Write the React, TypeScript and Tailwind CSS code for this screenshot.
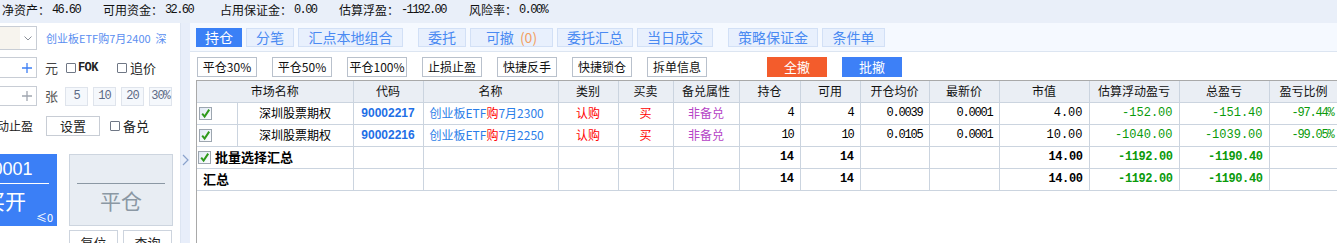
import React from 'react';

const cjk = "font-['Noto_Sans_CJK_SC',sans-serif]";
const mono = "font-['Liberation_Mono',monospace]";

const TickBox: React.FC = () => (
    <svg width="13" height="13" viewBox="0 0 13 13" className="shrink-0">
        <defs>
            <linearGradient id="tb" x1="0" y1="0" x2="1" y2="1">
                <stop offset="0" stopColor="#dfe8f4" />
                <stop offset="1" stopColor="#ffffff" />
            </linearGradient>
        </defs>
        <rect x="0.5" y="0.5" width="12" height="12" fill="url(#tb)" stroke="#9da6b0" />
        <path d="M3.2 6.6 L5.6 9.6 L10.2 2.6" stroke="#2f9a1c" strokeWidth="2" fill="none" />
    </svg>
);

const SmallBox: React.FC = () => <span className="block w-[10px] h-[10px] border border-[#6f7785] rounded-[1px] bg-white shrink-0" />;

const Plus: React.FC<{ color: string }> = ({ color }) => (
    <svg width="10" height="10" viewBox="0 0 10 10" className="ml-[22px]">
        <path d="M5 0 V10 M0 5 H10" stroke={color} strokeWidth="1.3" />
    </svg>
);

const TopBar: React.FC = () => {
    const items = [
        ['净资产：', '46.60', 'w-[101px]'],
        ['可用资金：', '32.60', 'w-[117px]'],
        ['占用保证金：', '0.00', 'w-[119px]'],
        ['估算浮盈：', '-1192.00', 'w-[130px]'],
        ['风险率：', '0.00%', 'w-[120px]'],
    ];
    return (
        <div className="h-[23px] bg-[#e9eff9] flex items-center pb-[4px] pl-[2px] text-[12px] text-[#111]">
            {items.map(([label, value, w]) => (
                <div key={label} className={`${w} flex items-center shrink-0`}>
                    <span>{label}</span>
                    <span className={`${mono} text-[12px] tracking-[-1.6px] ml-[2px]`}>{value}</span>
                </div>
            ))}
        </div>
    );
};

const LeftPanel: React.FC = () => (
    <div className="w-[180px] h-full bg-white overflow-hidden flex flex-col text-[12px] text-[#222]">
        <div className="mt-[3px] h-[24px] flex items-center">
            <div className="w-[37px] h-[24px] border-y border-r border-[#c8cdd5] flex">
                <div className="w-[20px] bg-[#f7f4ee]" />
                <div className="flex-1 flex items-center justify-center">
                    <svg width="8" height="5" viewBox="0 0 8 5"><path d="M0.5 0.5 L4 4 L7.5 0.5" stroke="#8a8f98" fill="none" /></svg>
                </div>
            </div>
            <span className="ml-[9px] text-[11px] text-[#5a8ef0] whitespace-pre">创业板ETF购7月2400  深</span>
        </div>
        <div className="mt-[7px] h-[21px] flex items-center">
            <div className="w-[37px] h-[21px] border-y border-r border-[#c8cdd5] flex items-center"><Plus color="#3d7ff5" /></div>
            <span className="ml-[8px] w-[21px] text-[13px] text-[#444]">元</span>
            <SmallBox />
            <span className={`ml-[2px] w-[39px] ${mono} text-[12px] font-bold tracking-[-0.6px]`}>FOK</span>
            <SmallBox />
            <span className="ml-[3px] text-[13px]">追价</span>
        </div>
        <div className="mt-[8px] h-[20px] flex items-center">
            <div className="w-[37px] h-[20px] border-y border-r border-[#c8cdd5] flex items-center"><Plus color="#a0a6b0" /></div>
            <span className="ml-[8px] w-[20px] text-[13px] text-[#555]">张</span>
            <div className="flex gap-[5px]">
                {['5', '10', '20', '30%'].map(v => (
                    <span key={v} className={`w-[23px] h-[19px] border border-[#dfe4ec] bg-[#f5f8fc] text-[#5d6a85] flex items-center justify-center text-[12px] ${mono} tracking-[-1px]`}>{v}</span>
                ))}
            </div>
        </div>
        <div className="mt-[10px] h-[20px] flex items-center">
            <span className="-ml-[15px] w-[61px] text-[12px] shrink-0">移动止盈</span>
            <span className="w-[54px] h-[20px] border border-[#c8cdd5] flex items-center justify-center text-[13px]">设置</span>
            <span className="ml-[10px]"><SmallBox /></span>
            <span className="ml-[3px] text-[13px]">备兑</span>
        </div>
        <div className="mt-[18px] h-[72px] flex gap-[12px] -ml-[47px] shrink-0">
            <div className="relative w-[104px] h-[72px] bg-[#3b7ff6] text-white flex flex-col items-stretch shrink-0">
                <div className="pt-[4px] h-[26px] leading-[22px] text-[18px] text-center font-['Liberation_Sans',sans-serif]">0.0001</div>
                <div className="mx-[8px] h-px bg-white mt-[3px]" />
                <div className="mt-[4px] h-[24px] leading-[24px] text-[21px] text-center">买开</div>
                <span className="absolute right-[4px] bottom-[3px] text-[11px] leading-none">≤0</span>
            </div>
            <div className="w-[104px] h-[72px] bg-[#e8edf3] border border-[#cdd5df] flex flex-col shrink-0">
                <div className="mx-[7px] h-px bg-[#8b98a4] mt-[28px]" />
                <div className="mt-[4px] h-[24px] leading-[24px] text-[21px] text-center text-[#8b98a4]">平仓</div>
            </div>
        </div>
        <div className="mt-[4px] ml-[69px] flex gap-[5px]">
            {['复位', '查询'].map(v => (
                <span key={v} className="w-[49px] h-[22px] border border-[#cdd4de] flex items-center justify-center text-[13px] pt-[4px]">{v}</span>
            ))}
        </div>
    </div>
);

const tabs = [
    { label: '持仓', w: 'w-[46px]', active: true },
    { label: '分笔', w: 'w-[48px]' },
    { label: '汇点本地组合', w: 'w-[105px]' },
    { label: '委托', w: 'w-[48px]', gap: true },
    { label: '可撤', w: 'w-[83px]', count: true },
    { label: '委托汇总', w: 'w-[76px]' },
    { label: '当日成交', w: 'w-[76px]' },
    { label: '策略保证金', w: 'w-[90px]', gap: true },
    { label: '条件单', w: 'w-[63px]' },
];

const tools = ['平仓30%', '平仓50%', '平仓100%', '止损止盈', '快捷反手', '快捷锁仓', '拆单信息'];

const cols = [40, 116, 70, 135, 60, 55, 66, 61, 60, 69, 70, 90, 90, 90, 69];
const heads = ['代码', '名称', '类别', '买卖', '备兑属性', '持仓', '可用', '开仓均价', '最新价', '市值', '估算浮动盈亏', '总盈亏', '盈亏比例'];

const rows = [
    { code: '90002217', price: '2300', pos: '4', avail: '4', open: '0.0039', last: '0.0001', mv: '4.00', fl: '-152.00', tot: '-151.40', ratio: '-97.44%' },
    { code: '90002216', price: '2250', pos: '10', avail: '10', open: '0.0105', last: '0.0001', mv: '10.00', fl: '-1040.00', tot: '-1039.00', ratio: '-99.05%' },
];

const td = 'border-r border-b border-[#cbd4df] p-0';
const num = `${td} text-right pr-[6px] ${mono} text-[12px] tracking-[-1.2px]`;
const wnum = `${td} text-right pr-[6px] ${mono} text-[12px]`;
const bnum = `${td} text-right pr-[6px] ${mono} text-[12px] font-bold tracking-[-0.4px]`;

const PositionTable: React.FC = () => (
    <table className="table-fixed border-collapse w-[1141px] text-[12px]">
        <colgroup>
            {cols.map((c, i) => <col key={i} style={{ width: c }} />)}
        </colgroup>
        <thead>
            <tr className="h-[21px] bg-[#eaeef4] text-[#111]">
                <th colSpan={2} className={`${td} font-normal`}>市场名称</th>
                {heads.map(h => <th key={h} className={`${td} font-normal`}>{h}</th>)}
            </tr>
        </thead>
        <tbody>
            {rows.map(r => (
                <tr key={r.code} className="h-[22px]">
                    <td className={`${td} pl-[2px]`}><div className="flex"><TickBox /></div></td>
                    <td className={`${td} text-center`}>深圳股票期权</td>
                    <td className={`${td} text-center text-[#1e6fe6] font-bold font-['Liberation_Sans',sans-serif]`}>{r.code}</td>
                    <td className={`${td} pl-[6px] text-[#2b7ee8] whitespace-nowrap`}>创业板ETF<span className="text-[#ff0000]">购</span>7月{r.price}</td>
                    <td className={`${td} text-center text-[#ff0000]`}>认购</td>
                    <td className={`${td} text-center text-[#ff0000]`}>买</td>
                    <td className={`${td} text-center text-[#b544c6]`}>非备兑</td>
                    <td className={num}>{r.pos}</td>
                    <td className={num}>{r.avail}</td>
                    <td className={num}>{r.open}</td>
                    <td className={num}>{r.last}</td>
                    <td className={wnum}>{r.mv}</td>
                    <td className={`${wnum} text-[#0a9a0a]`}>{r.fl}</td>
                    <td className={`${wnum} text-[#0a9a0a]`}>{r.tot}</td>
                    <td className={`${num} !pr-[4px] text-[#0a9a0a]`}>{r.ratio}</td>
                </tr>
            ))}
            {[true, false].map(batch => (
                <tr key={String(batch)} className="h-[22px]">
                    <td colSpan={2} className={`${td} ${batch ? 'pl-[1px]' : 'pl-[6px]'}`}>
                        <div className="flex items-center gap-[4px] font-bold text-[13px]">
                            {batch && <TickBox />}
                            <span>{batch ? '批量选择汇总' : '汇总'}</span>
                        </div>
                    </td>
                    <td className={td} />
                    <td className={td} />
                    <td className={td} />
                    <td className={td} />
                    <td className={td} />
                    <td className={bnum}>14</td>
                    <td className={bnum}>14</td>
                    <td className={td} />
                    <td className={td} />
                    <td className={bnum}>14.00</td>
                    <td className={`${bnum} text-[#0a9a0a]`}>-1192.00</td>
                    <td className={`${bnum} text-[#0a9a0a]`}>-1190.40</td>
                    <td className={td} />
                </tr>
            ))}
        </tbody>
    </table>
);

const MainArea: React.FC = () => (
    <div className="flex-1 flex flex-col min-w-0">
        <div className="h-[29px] bg-[#f5f9ff] border-b border-[#dce5f1] flex items-start pt-[5px] pl-[6px] gap-[4px] shrink-0">
            {tabs.map(t => (
                <div
                    key={t.label}
                    className={`${t.w} ${t.gap ? 'ml-[11px]' : ''} h-[19px] flex items-center justify-center text-[14px] border ${t.active ? 'bg-[#3a80f6] border-[#3a80f6] text-white' : 'bg-[#e8f0fd] border-[#d2e0f6] text-[#4a8af2]'}`}
                >
                    {t.label}
                    {t.count && <span className="ml-[6px] text-[#f3a062]">(0)</span>}
                </div>
            ))}
        </div>
        <div className="h-[28px] bg-white flex items-start pt-[5px] pl-[7px] gap-[15px] shrink-0">
            {tools.map(t => (
                <span key={t} className="w-[60px] h-[20px] border border-[#b9c1cc] flex items-center justify-center text-[12px] text-[#111]">{t}</span>
            ))}
            <span className="ml-[45px] w-[60px] h-[20px] bg-[#f35c2c] text-white flex items-center justify-center text-[13px]">全撤</span>
            <span className="w-[60px] h-[20px] bg-[#3d80f7] text-white flex items-center justify-center text-[13px]">批撤</span>
        </div>
        <div className="flex-1 ml-[6px] border-l border-t border-[#a9a9a9] bg-white overflow-hidden">
            <PositionTable />
        </div>
    </div>
);

export default function App() {
    return (
        <div className={`w-[1337px] h-[243px] overflow-hidden bg-white ${cjk}`}>
            <TopBar />
            <div className="h-[220px] flex">
                <LeftPanel />
                <div className="w-[10px] bg-[#e8eefa] border-l border-[#dde5f2] shrink-0 flex flex-col items-center">
                    <svg width="7" height="12" viewBox="0 0 7 12" className="mt-[131px]">
                        <path d="M1 1 L6 6 L1 11" stroke="#8aa2cc" strokeWidth="1.2" fill="none" />
                    </svg>
                </div>
                <MainArea />
            </div>
        </div>
    );
}
